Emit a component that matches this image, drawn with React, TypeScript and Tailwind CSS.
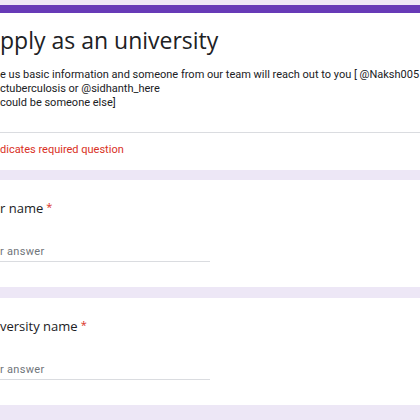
import React from "react";

function Question({ label }: { label: string }) {
  return (
    <div className="bg-white h-[107px] flex flex-col">
      <div className="h-[19px]" />
      <div className="h-[18px] leading-[18px] text-[13px] text-[#202124] font-['Open_Sans',sans-serif] whitespace-nowrap">
        {label}
        <span className="text-[#d93025] ml-[3px] text-[11px] relative top-[-2px]">*</span>
      </div>
      <div className="h-[25px]" />
      <div className="w-[210px] h-[20px] leading-[19px] text-[11px] text-[#70757a] tracking-[0.3px] font-['Roboto',sans-serif] border-b border-[#dadce0] whitespace-nowrap">
        r answer
      </div>
    </div>
  );
}

export default function App() {
  return (
    <div className="w-[420px] h-[420px] overflow-hidden bg-[#ede7f6] pt-[5px] flex flex-col">
      <div className="bg-white flex flex-col">
        <div className="h-[8px] bg-[#673ab7]" />
        <div className="h-[119px] flex flex-col">
          <div className="h-[14px]" />
          <div className="h-[26px] leading-[26px] text-[23px] text-[#202124] font-['Open_Sans',sans-serif] whitespace-nowrap">
            pply as an university
          </div>
          <div className="h-[15px]" />
          <div className="text-[11px] leading-[14px] text-[#202124] font-['Roboto',sans-serif] whitespace-nowrap">
            <div>e us basic information and someone from our team will reach out to you [ @Naksh005</div>
            <div>ctuberculosis or @sidhanth_here</div>
            <div>could be someone else]</div>
          </div>
        </div>
        <div className="h-px bg-[#dadce0]" />
        <div className="h-[37px] flex items-center pb-[3px] text-[11px] text-[#d93025] font-['Roboto',sans-serif] whitespace-nowrap">
          dicates required question
        </div>
      </div>
      <div className="h-[10px] shrink-0" />
      <Question label="r name" />
      <div className="h-[11px] shrink-0" />
      <Question label="versity name" />
    </div>
  );
}
